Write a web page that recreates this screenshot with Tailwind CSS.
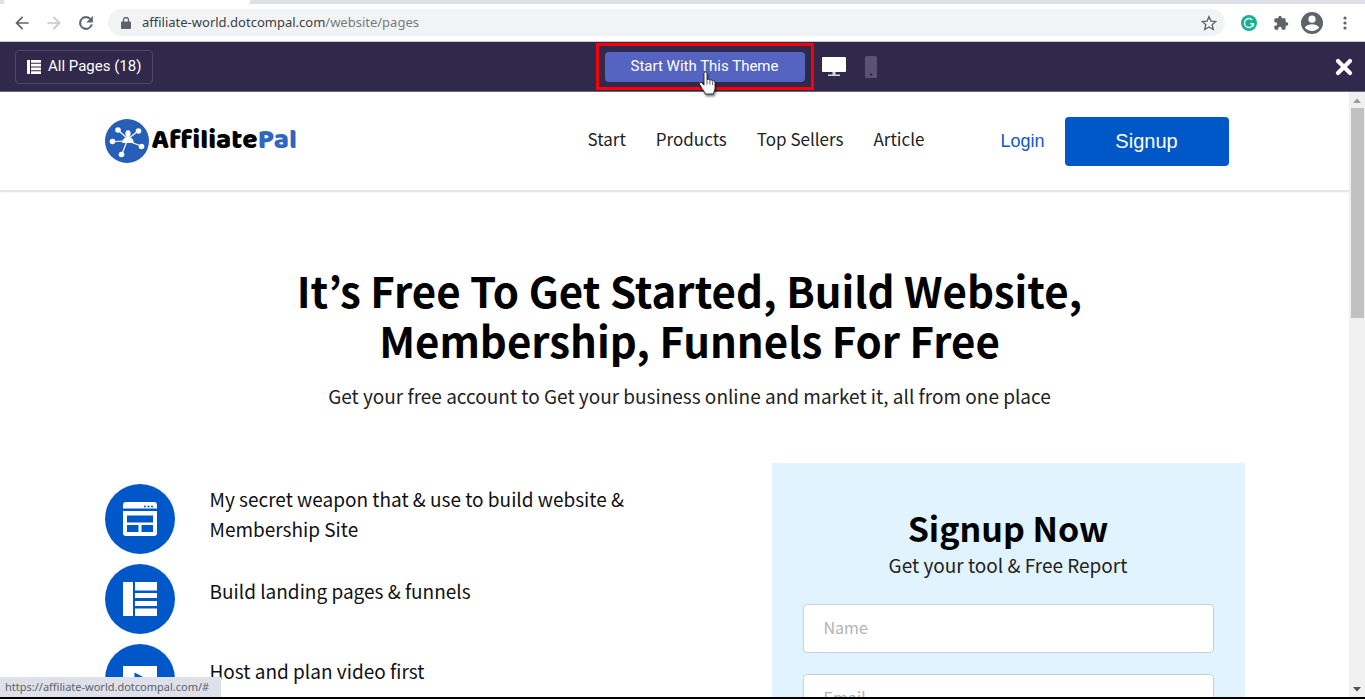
<!DOCTYPE html>
<html lang="en">
<head>
    <meta charset="UTF-8">
    <meta name="viewport" content="width=device-width, initial-scale=1.0">
    <title>AffiliatePal</title>
    <script src="https://cdn.jsdelivr.net/npm/@tailwindcss/browser@4"></script>
</head>
<body class="h-screen flex flex-col overflow-hidden bg-white text-black font-['Noto_Sans_CJK_JP','Noto_Sans',sans-serif]">

    <!-- Browser chrome -->
    <div class="shrink-0 font-['Noto_Sans',sans-serif]">
        <div class="h-1 bg-[#dee1e6] flex">
            <div class="ml-1 w-[246px] bg-white rounded-b-xs"></div>
        </div>
        <div class="h-[38px] pl-2 pr-3 flex items-center border-b border-[#c9c9d0]">
            <nav class="flex items-center text-[#5f6368]" aria-label="Browser">
                <button class="w-7 h-7 grid place-items-center" aria-label="Back">
                    <svg class="w-5 h-5" viewBox="0 0 24 24" fill="currentColor"><path d="M20 11H7.8l5.6-5.6L12 4l-8 8 8 8 1.4-1.4L7.8 13H20z"/></svg>
                </button>
                <button class="w-7 h-7 ml-1 grid place-items-center text-[#c4c6c9]" aria-label="Forward">
                    <svg class="w-5 h-5" viewBox="0 0 24 24" fill="currentColor"><path d="M4 11h12.2l-5.6-5.6L12 4l8 8-8 8-1.4-1.4 5.6-5.6H4z"/></svg>
                </button>
                <button class="w-7 h-7 ml-1 grid place-items-center" aria-label="Reload">
                    <svg class="w-5 h-5" viewBox="0 0 24 24" fill="currentColor"><path d="M17.65 6.35A8 8 0 1 0 19.73 14h-2.08A6 6 0 1 1 12 6c1.66 0 3.14.69 4.22 1.78L13 11h7V4z" stroke="currentColor" stroke-width=".6"/></svg>
                </button>
            </nav>
            <div class="ml-2 flex-1 h-[27px] pl-[13px] pr-2 flex items-center gap-[11px] rounded-full bg-[#f1f3f4]">
                <svg class="w-[10px] h-3" viewBox="0 0 10 12"><path d="M1 4.500h8a1 1 0 0 1 1 1V11a1 1 0 0 1-1 1H1a1 1 0 0 1-1-1V5.500a1 1 0 0 1 1-1z" fill="#5f6368"/><path d="M2.500 5V3a2.500 2.500 0 0 1 5 0v2" fill="none" stroke="#5f6368" stroke-width="1.300"/></svg>
                <p class="flex-1 text-[13px] text-[#3c4043]">affiliate-world.dotcompal.com<span class="text-[#777b80]">/website/pages</span></p>
                <button aria-label="Bookmark this page">
                    <svg class="w-4 h-4" viewBox="0 0 24 24" fill="none" stroke="#5f6368" stroke-width="2"><path d="M12 2.500l2.900 6.700 7.300.6-5.500 4.800 1.700 7.100L12 17.900l-6.400 3.800 1.700-7.100-5.500-4.800 7.300-.6z"/></svg>
                </button>
            </div>
            <div class="flex items-center ml-4">
                <button class="w-4 h-4" aria-label="Extension">
                    <svg viewBox="0 0 16 16"><circle cx="8" cy="8" r="8" fill="#15b097"/><path d="M11.200 4.900A4.500 4.500 0 1 0 12.400 8.800H9.200M12.400 8.800v2.600" fill="none" stroke="#fff" stroke-width="1.400"/></svg>
                </button>
                <button class="w-4 h-4 ml-4" aria-label="Extensions">
                    <svg viewBox="0 0 24 24" fill="#5f6368"><path d="M20.500 11H19V7a2 2 0 0 0-2-2h-4V3.500a2.500 2.500 0 0 0-5 0V5H4a2 2 0 0 0-2 2v3.800h1.500a2.700 2.700 0 0 1 0 5.400H2V20a2 2 0 0 0 2 2h3.800v-1.500a2.700 2.700 0 0 1 5.400 0V22H17a2 2 0 0 0 2-2v-4h1.500a2.500 2.500 0 0 0 0-5z"/></svg>
                </button>
                <button class="w-[22px] h-[22px] ml-3" aria-label="Profile">
                    <svg viewBox="0 0 22 22"><circle cx="11" cy="11" r="11" fill="#5f6368"/><circle cx="11" cy="7.200" r="3.600" fill="#fff"/><path d="M3.800 15.500c1.200-2.300 4.800-3.300 7.200-3.300s6 1 7.200 3.300C16.500 17.700 14 19 11 19s-5.500-1.300-7.200-3.500z" fill="#fff"/></svg>
                </button>
                <button class="w-4 h-4 ml-[14px]" aria-label="Menu">
                    <svg viewBox="0 0 16 16" fill="#5f6368"><circle cx="8" cy="3" r="1.600"/><circle cx="8" cy="8" r="1.600"/><circle cx="8" cy="13" r="1.600"/></svg>
                </button>
            </div>
        </div>
    </div>

    <!-- Theme preview bar -->
    <div class="shrink-0 h-[50px] px-3 flex items-center bg-[#30294b] border-b border-[#6a6580] font-[Roboto,sans-serif] text-[15px] text-white">
        <div class="flex-1">
            <button class="ml-[3px] h-[34px] px-[11px] flex items-center gap-[7px] rounded border border-[#4d4768]">
                <svg class="w-[14px] h-[14px]" viewBox="0 0 14 14" fill="#fff"><path d="M0 0h3v14H0zM4 0h10v2.800H4zM4 3.800h10v2.700H4zM4 7.500h10v2.700H4zM4 11.200h10V14H4z"/></svg>
                All Pages (18)
            </button>
        </div>
        <div class="relative ml-11 w-[218px] h-[47px] shrink-0 border-[3px] border-[#fb0007] flex items-center justify-center">
            <button class="w-[200px] h-[30px] rounded bg-[#5563c1]">Start With This Theme</button>
            <svg class="absolute left-[99px] top-[25px] w-5 h-[26px] drop-shadow-[1px_2px_1px_rgba(0,0,0,0.5)]" viewBox="0 0 20 26"><path d="M6 2.500C6 .6 9 .6 9 2.500V9c.3-1 2.700-.9 2.900.5.400-1 2.500-.8 2.700.7.700-.8 2.400-.4 2.400 1.300v5.500c0 2.500-1.500 3.500-1.500 6H7.200c0-2.200-2.300-3.600-3.200-5.500L1.500 13c-.5-1.600 1.400-2.300 2.500-1l2 2.200z" fill="#fff" stroke="#222" stroke-width=".9"/><path d="M9 9v4.500M11.900 10v3.500M14.600 11v3" stroke="#333" stroke-width=".8"/></svg>
        </div>
        <div class="flex-1 flex items-center">
            <button class="ml-2 w-6 h-5" aria-label="Desktop preview">
                <svg viewBox="0 0 24 20"><path d="M1 0h22a1 1 0 0 1 1 1v13a1 1 0 0 1-1 1H1a1 1 0 0 1-1-1V1a1 1 0 0 1 1-1z" fill="#fff"/><path d="M10.500 15h3v2.500H18V19H6v-1.500h4.500z" fill="#d9d6df"/></svg>
            </button>
            <button class="ml-[19px] w-3 h-[22px]" aria-label="Mobile preview">
                <svg viewBox="0 0 12 22"><rect width="12" height="22" rx="1.500" fill="#5a5274"/><circle cx="6" cy="18.500" r="1.200" fill="#30294b"/></svg>
            </button>
            <button class="ml-auto w-[18px] h-[18px]" aria-label="Close">
                <svg viewBox="0 0 18 18"><path d="M3 3l12 12M15 3L3 15" stroke="#fff" stroke-width="4.200" stroke-linecap="round"/></svg>
            </button>
        </div>
    </div>

    <!-- Previewed site -->
    <div class="flex-1 min-h-0 flex border-b-2 border-black">
        <div class="flex-1 overflow-hidden">
            <header class="h-[100px] border-b-2 border-[#e6e6e9] shadow-xs">
                <div class="max-w-[1140px] h-full mx-auto pr-4 flex items-center">
                    <a href="#" class="flex items-center gap-[3px] text-[28px] leading-[44px] font-extrabold font-['Baloo_2','Noto_Sans',sans-serif]">
                        <svg class="w-11 h-11" viewBox="0 0 44 44"><circle cx="22" cy="22" r="22" fill="#265fb5"/><path d="M23 20L13 11M23 20l10-8M23 22L8 22.500M23 22l13 5M22 22l-5 13" stroke="#fff" stroke-width="1.200"/><g fill="#fff"><circle cx="13" cy="11" r="2.800"/><circle cx="33.500" cy="12" r="2.800"/><circle cx="7.500" cy="22.500" r="2.800"/><circle cx="36.500" cy="27.500" r="2.800"/><circle cx="16.500" cy="35.500" r="2.800"/><ellipse cx="23" cy="14.500" rx="2.600" ry="3.300"/><path d="M21.500 16h3v2.500c2.500.6 4 1.500 4.300 5.500H17.200c.3-4 1.800-4.900 4.300-5.500z"/></g></svg>
                        <span>Affiliate<span class="text-[#2f66c0]">Pal</span></span>
                    </a>
                    <nav class="ml-auto mb-1 flex gap-[30px] text-[17px] text-[#222]">
                        <a href="#">Start</a>
                        <a href="#">Products</a>
                        <a href="#">Top Sellers</a>
                        <a href="#">Article</a>
                    </nav>
                    <div class="ml-[76px] flex items-center gap-5 font-['Liberation_Sans',sans-serif]">
                        <a href="#" class="text-lg text-[#0e5ac8]">Login</a>
                        <a href="#" class="w-[164px] h-[49px] grid place-items-center rounded bg-[#0057c8] text-xl text-white">Signup</a>
                    </div>
                </div>
            </header>

            <main class="max-w-[1140px] mx-auto">
                <section class="pt-[73px] pl-[30px] text-center">
                    <h1 class="text-[42px] leading-[50px] font-bold">It’s Free To Get Started, Build Website,<br>Membership, Funnels For Free</h1>
                    <p class="mt-4 text-[19px] leading-[30px] text-[#222]">Get your free account to Get your business online and market it, all from one place</p>
                </section>

                <div class="mt-[52px] flex justify-between items-start">
                    <ul class="mt-[21px] w-[560px] flex flex-col gap-[10px] text-[19px] leading-[30px] text-[#111]">
                        <li class="flex gap-[35px]">
                            <svg class="w-[70px] h-[70px] shrink-0" viewBox="0 0 70 70"><circle cx="35" cy="35" r="35" fill="#0057c8"/><path d="M21 18h28a3 3 0 0 1 3 3v3.500H18V21a3 3 0 0 1 3-3zM18 27h34v22a3 3 0 0 1-3 3H21a3 3 0 0 1-3-3z" fill="#fff"/><path d="M22 31.500h26v7H22zM22 41h11.500v7H22zM36.500 41H48v7H36.500z" fill="#0057c8"/><g fill="#0057c8"><circle cx="40" cy="22.500" r="1"/><circle cx="43.500" cy="22.500" r="1"/><circle cx="47" cy="22.500" r="1"/></g></svg>
                            <p>My secret weapon that &amp; use to build website &amp;<br>Membership Site</p>
                        </li>
                        <li class="flex gap-[35px]">
                            <svg class="w-[70px] h-[70px] shrink-0" viewBox="0 0 70 70"><circle cx="35" cy="35" r="35" fill="#0057c8"/><path d="M18 18h10v34H18zM30 18h22v8.500H30zM30 29h22v5H30zM30 37h22v5H30zM30 44.500h22V52H30z" fill="#fff"/></svg>
                            <p class="mt-3">Build landing pages &amp; funnels</p>
                        </li>
                        <li class="flex gap-[35px]">
                            <svg class="w-[70px] h-[70px] shrink-0" viewBox="0 0 70 70"><circle cx="35" cy="35" r="35" fill="#0057c8"/><path d="M18 22h34v26H18z" fill="#fff"/><path d="M29.500 28.500v13L42 35z" fill="#0057c8"/></svg>
                            <p class="mt-3">Host and plan video first</p>
                        </li>
                    </ul>

                    <form class="w-[473px] px-[31px] pt-[43px] pb-10 rounded-xs bg-[#e1f3ff] text-center">
                        <h2 class="text-[34px] leading-[44px] font-bold">Signup Now</h2>
                        <p class="text-[19px] leading-[30px] text-[#222]">Get your tool &amp; Free Report</p>
                        <div class="mt-6 flex flex-col gap-[21px]">
                            <input type="text" aria-label="Name" placeholder="Name" class="h-[49px] px-5 pb-1 rounded border border-[#c8d0dc] bg-white text-base placeholder:text-[#b3b3b3]">
                            <input type="email" aria-label="Email" placeholder="Email" class="h-[49px] px-5 pb-1 rounded border border-[#c8d0dc] bg-white text-base placeholder:text-[#b3b3b3]">
                        </div>
                    </form>
                </div>
            </main>
        </div>

        <!-- Scrollbar -->
        <div class="w-4 shrink-0 flex flex-col items-center bg-[#f0f0f0]">
            <svg class="w-2 h-4" viewBox="0 0 8 16"><path d="M0 11l4-4.500L8 11z" fill="#9b9b9b"/></svg>
            <div class="w-[13px] h-[210px] bg-[#c1c1c1]"></div>
            <svg class="w-2 h-4 mt-auto" viewBox="0 0 8 16"><path d="M0 6l4 4.500L8 6z" fill="#505050"/></svg>
        </div>
    </div>

    <!-- Link target shown by the browser -->
    <div class="absolute left-0 bottom-[2px] h-5 pl-[5px] pr-3 flex items-center bg-[#dee1ea] font-['Noto_Sans',sans-serif] text-[11px] text-[#5f6368]">https://affiliate-world.dotcompal.com/#</div>

</body>
</html>
